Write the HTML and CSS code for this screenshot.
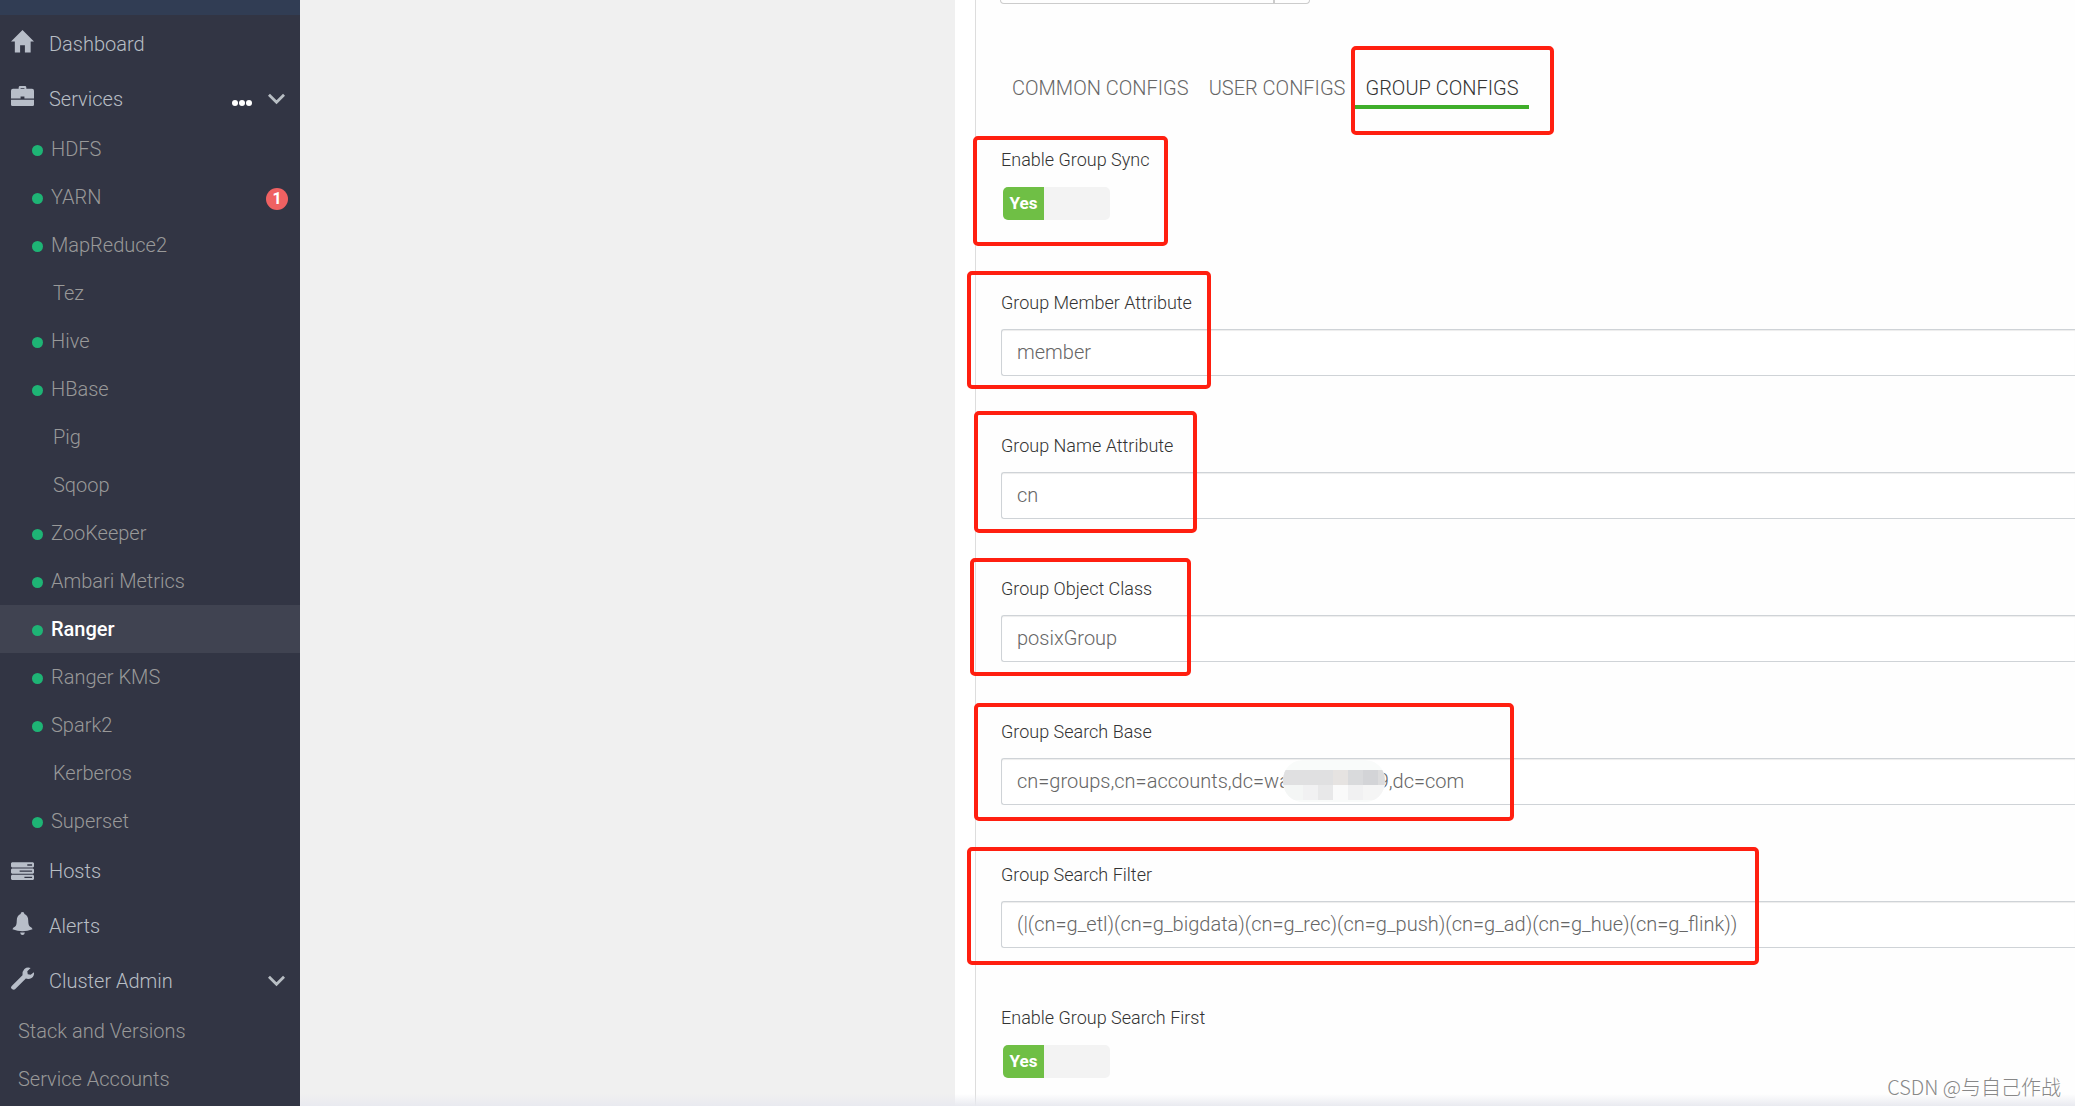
FILE: index.html
```html
<!DOCTYPE html>
<html lang="en">
<head>
    <meta charset="utf-8">
    <title>Ambari - Ranger Configs</title>
    <link rel="stylesheet" href="styles.css">
</head>

<body>
    <div class="layout">
        <nav class="sidebar">
            <div class="topstrip"></div>
            <ul class="menu">
                <li>
                    <a class="main-item" href="#">
                        <svg class="icon" viewBox="0 0 24 24"><path d="M12 0L24 12H20.500V23.500H14.500V16H9.500V23.500H4V12H0Z"/></svg>
                        <span>Dashboard</span>
                    </a>
                </li>
                <li class="open">
                    <div class="main-item">
                        <svg class="icon" viewBox="0 0 24 24"><path fill-rule="evenodd" d="M8 4V2.500Q8 1 9.500 1H14.500Q16 1 16 2.500V4H22Q24 4 24 6V14H14V12H10V14H0V6Q0 4 2 4ZM10 4H14V3H10ZM0 15.500H24V20.500Q24 22 22.500 22H1.500Q0 22 0 20.500Z"/></svg>
                        <a href="#">Services</a>
                        <button class="dots" aria-label="Service actions"><i></i><i></i><i></i></button>
                        <button class="toggle" aria-label="Collapse services"><svg viewBox="0 0 18 12"><path d="M1 1.500L9 9.500L17 1.500"/></svg></button>
                    </div>
                    <ul class="submenu services">
                        <li><a href="#"><i class="dot"></i>HDFS</a></li>
                        <li><a href="#"><i class="dot"></i>YARN<span class="badge">1</span></a></li>
                        <li><a href="#"><i class="dot"></i>MapReduce2</a></li>
                        <li><a class="client" href="#">Tez</a></li>
                        <li><a href="#"><i class="dot"></i>Hive</a></li>
                        <li><a href="#"><i class="dot"></i>HBase</a></li>
                        <li><a class="client" href="#">Pig</a></li>
                        <li><a class="client" href="#">Sqoop</a></li>
                        <li><a href="#"><i class="dot"></i>ZooKeeper</a></li>
                        <li><a href="#"><i class="dot"></i>Ambari Metrics</a></li>
                        <li><a class="active" href="#"><i class="dot"></i>Ranger</a></li>
                        <li><a href="#"><i class="dot"></i>Ranger KMS</a></li>
                        <li><a href="#"><i class="dot"></i>Spark2</a></li>
                        <li><a class="client" href="#">Kerberos</a></li>
                        <li><a href="#"><i class="dot"></i>Superset</a></li>
                    </ul>
                </li>
                <li>
                    <a class="main-item" href="#">
                        <svg class="icon" viewBox="0 0 24 24"><path fill-rule="evenodd" d="M1 5.500H23L24 6.500V10L23 11H1L0 10V6.500ZM17 7.500V9H22V7.500ZM1 12H23L24 13V16.500L23 17.500H1L0 16.500V13ZM9 14V15.500H22V14ZM1 18.500H23L24 19.500V23L23 24H1L0 23V19.500ZM14 20.500V22H22V20.500Z"/></svg>
                        <span>Hosts</span>
                    </a>
                </li>
                <li>
                    <a class="main-item" href="#">
                        <svg class="icon" viewBox="0 0 24 24"><path d="M12 0Q14 0 14 2Q18 3.500 18 9Q18 14 20 15.500Q22 16.500 22.500 18Q17 20 12 20Q7 20 1.500 18Q2 16.500 4 15.500Q6 14 6 9Q6 3.500 10 2Q10 0 12 0ZM9.500 21.300H14.500Q14 24 12 24Q10 24 9.500 21.300Z"/></svg>
                        <span>Alerts</span>
                    </a>
                </li>
                <li class="open">
                    <div class="main-item">
                        <svg class="icon" viewBox="0 0 24 24"><path d="M20.500 1L17 4.500L17.500 7.500L20.500 8L24 5.500Q24.500 9.500 21.500 11.500Q18.500 13 15.500 12L4.500 23Q3 24.500 1 23Q-1 21.500 1 19.500L12 8.500Q11.500 4.500 14 2Q17 -0.500 20.500 1Z"/></svg>
                        <a href="#">Cluster Admin</a>
                        <button class="toggle" aria-label="Collapse cluster admin"><svg viewBox="0 0 18 12"><path d="M1 1.500L9 9.500L17 1.500"/></svg></button>
                    </div>
                    <ul class="submenu admin">
                        <li><a href="#">Stack and Versions</a></li>
                        <li><a href="#">Service Accounts</a></li>
                    </ul>
                </li>
            </ul>
        </nav>

        <main class="content">
            <div class="panel">
                <div class="select-box"><span></span></div>

                <div class="tabs">
                    <a href="#">COMMON CONFIGS</a>
                    <a href="#">USER CONFIGS</a>
                    <a class="active" href="#">GROUP CONFIGS<span class="mark mark-tab"></span></a>
                </div>

                <div class="field">
                    <label for="sync">Enable Group Sync</label>
                    <button class="switch" id="sync" role="switch" aria-checked="true"><span>Yes</span></button>
                    <span class="mark mark-sync"></span>
                </div>
                <div class="field">
                    <label for="member">Group Member Attribute</label>
                    <input type="text" id="member" value="member">
                    <span class="mark mark-member"></span>
                </div>
                <div class="field">
                    <label for="name">Group Name Attribute</label>
                    <input type="text" id="name" value="cn">
                    <span class="mark mark-name"></span>
                </div>
                <div class="field">
                    <label for="class">Group Object Class</label>
                    <input type="text" id="class" value="posixGroup">
                    <span class="mark mark-class"></span>
                </div>
                <div class="field">
                    <label for="base">Group Search Base</label>
                    <input type="text" id="base" value="cn=groups,cn=accounts,dc=wa                  9,dc=com">
                    <svg class="mosaic" viewBox="0 0 102 42">
                        <clipPath id="round"><rect width="102" height="42" rx="20"/></clipPath>
                        <g clip-path="url(#round)" shape-rendering="crispEdges">
                            <rect width="102" height="42" fill="#f9fbfa"/>
                            <rect y="10" width="50" height="15" fill="#e0e0e1"/>
                            <rect x="50" y="10" width="15" height="15" fill="#e6e3e1"/>
                            <rect x="65" y="10" width="15" height="15" fill="#d9dadc"/>
                            <rect x="80" y="10" width="15" height="15" fill="#d3d4d7"/>
                            <rect x="95" y="10" width="7" height="15" fill="#dcdcdd"/>
                            <rect y="25" width="20" height="15" fill="#f4f6f5"/>
                            <rect x="20" y="25" width="15" height="15" fill="#f1f1f2"/>
                            <rect x="35" y="25" width="15" height="15" fill="#e8e8e9"/>
                            <rect x="50" y="25" width="15" height="15" fill="#fafafa"/>
                            <rect x="65" y="25" width="15" height="15" fill="#f1f1f2"/>
                            <rect x="80" y="25" width="22" height="15" fill="#f5f5f5"/>
                        </g>
                    </svg>
                    <span class="mark mark-base"></span>
                </div>
                <div class="field">
                    <label for="filter">Group Search Filter</label>
                    <input type="text" id="filter" value="(|(cn=g_etl)(cn=g_bigdata)(cn=g_rec)(cn=g_push)(cn=g_ad)(cn=g_hue)(cn=g_flink))">
                    <span class="mark mark-filter"></span>
                </div>
                <div class="field">
                    <label for="first">Enable Group Search First</label>
                    <button class="switch" id="first" role="switch" aria-checked="true"><span>Yes</span></button>
                </div>
            </div>
            <div class="fade"></div>
            <div class="watermark">CSDN @与自己作战</div>
        </main>
    </div>
</body>
</html>
```
FILE: styles.css
```css
* {
    box-sizing: border-box;
}

body {
    margin: 0;
    font-family: Roboto, "Noto Sans CJK SC", sans-serif;
    font-size: 20px;
    font-weight: 350;
    overflow: hidden;
}

a {
    color: inherit;
    text-decoration: none;
}

ul {
    list-style: none;
    margin: 0;
    padding: 0;
}

button {
    font: inherit;
    border: 0;
    padding: 0;
    background: none;
}

.layout {
    display: flex;
    height: 100vh;
}

/* sidebar */
.sidebar {
    flex: 0 0 300px;
    background: #323544;
    color: #b8bec4;
    overflow: hidden;
}

.topstrip {
    height: 15px;
    background: #313d54;
}

.menu {
    padding-top: 4px;
}

.menu > li {
    margin-bottom: 4px;
}

.menu > li.open {
    margin-bottom: 0;
}

.main-item {
    display: flex;
    align-items: center;
    height: 51px;
    padding: 0 15px 1px 11px;
}

.icon {
    width: 23px;
    height: 23px;
    margin: 0 15px 6px 0;
    fill: #b8bec9;
    overflow: visible;
}

.dots {
    display: flex;
    gap: 1px;
    margin: 8px 16px 0 auto;
}

.dots i {
    width: 6px;
    height: 6px;
    border-radius: 50%;
    background: #fff;
}

.toggle {
    display: flex;
    margin-left: auto;
}

.dots + .toggle {
    margin-left: 0;
}

.toggle svg {
    width: 17px;
    height: 12px;
    fill: none;
    stroke: #b8bec4;
    stroke-width: 3;
}

.services {
    padding-bottom: 1px;
}

.submenu a {
    display: flex;
    align-items: center;
    height: 48px;
    color: #999;
}

.services a {
    padding: 0 12px 0 32px;
}

.services a.client {
    padding-left: 53px;
}

.submenu a.active {
    background: #404351;
    color: #fff;
    font-weight: 500;
}

.admin a {
    padding-left: 18px;
}

.dot {
    width: 11px;
    height: 11px;
    margin: 3px 8px 0 0;
    border-radius: 50%;
    background: #1eb475;
}

.badge {
    width: 22px;
    height: 22px;
    margin: 4px 0 0 auto;
    border-radius: 50%;
    background: #ef6162;
    color: #fff;
    font-size: 16px;
    font-weight: 700;
    line-height: 22px;
    text-align: center;
}

/* configs */
.content {
    position: relative;
    flex: 1;
    min-width: 0;
    padding-left: 655px;
    background: #f0f0f0;
    overflow: hidden;
}

.panel {
    height: 100%;
    padding-left: 20px;
    background: linear-gradient(90deg, #fff 20px, #ddd 20px, #ddd 21px, #fefefe 21px);
}

.select-box {
    width: 310px;
    height: 4px;
    margin-left: 25px;
    border: 1px solid #ccc;
    border-top: 0;
    border-radius: 0 0 4px 4px;
}

.select-box span {
    display: block;
    width: 274px;
    height: 3px;
    border-right: 2px solid #ccc;
}

.tabs {
    display: flex;
    margin: 62px 0 0 27px;
}

.tabs a {
    position: relative;
    height: 43px;
    padding: 0 10px;
    border-bottom: 4px solid transparent;
    color: #666;
    font-weight: 300;
    line-height: 44px;
}

.tabs a.active {
    border-color: #3fae2a;
    color: #333;
}

.field {
    position: relative;
    height: 143px;
    padding-left: 26px;
}

.tabs + .field {
    margin-top: 39px;
}

.field label {
    display: block;
    color: #333;
    font-size: 18px;
    line-height: 24px;
}

.field input {
    display: block;
    width: 100%;
    height: 47px;
    margin-top: 14px;
    padding: 0 15px 2px;
    border: 1px solid #cfd3d7;
    border-right: 0;
    border-radius: 3px 0 0 3px;
    background: #fff;
    box-shadow: inset 0 1px 1px rgba(0, 0, 0, .075);
    color: #666;
    font: inherit;
}

.switch {
    display: block;
    width: 107px;
    height: 33px;
    margin: 15px 0 0 2px;
    border-radius: 5px;
    background: #f3f3f3;
    overflow: hidden;
    text-align: left;
}

.switch span {
    display: block;
    width: 41px;
    background: #6fbf45;
    color: #fff;
    font-size: 17px;
    font-weight: 700;
    line-height: 33px;
    text-align: center;
}

.mosaic {
    position: absolute;
    top: 40px;
    left: 308px;
    width: 102px;
    height: 42px;
}

/* red highlight boxes */
.mark {
    position: absolute;
    border: 4px solid #ff1f10;
    border-radius: 5px;
    pointer-events: none;
}

.mark-tab {
    top: -20px;
    left: -4px;
    width: 203px;
    height: 89px;
}

.mark-sync {
    top: -12px;
    left: -2px;
    width: 195px;
    height: 110px;
}

.mark-member {
    top: -20px;
    left: -8px;
    width: 244px;
    height: 118px;
}

.mark-name {
    top: -23px;
    left: -1px;
    width: 223px;
    height: 122px;
}

.mark-class {
    top: -19px;
    left: -5px;
    width: 221px;
    height: 118px;
}

.mark-base {
    top: -17px;
    left: -1px;
    width: 540px;
    height: 118px;
}

.mark-filter {
    top: -16px;
    left: -8px;
    width: 792px;
    height: 118px;
}

.fade {
    position: absolute;
    right: 0;
    bottom: 0;
    left: 0;
    height: 12px;
    background: linear-gradient(rgba(233, 234, 240, 0), #e9eaf0);
}

.watermark {
    position: absolute;
    right: 14px;
    bottom: 5px;
    color: #888;
    font-family: "Noto Sans CJK SC", sans-serif;
    font-weight: 300;
    line-height: 28px;
}
```
